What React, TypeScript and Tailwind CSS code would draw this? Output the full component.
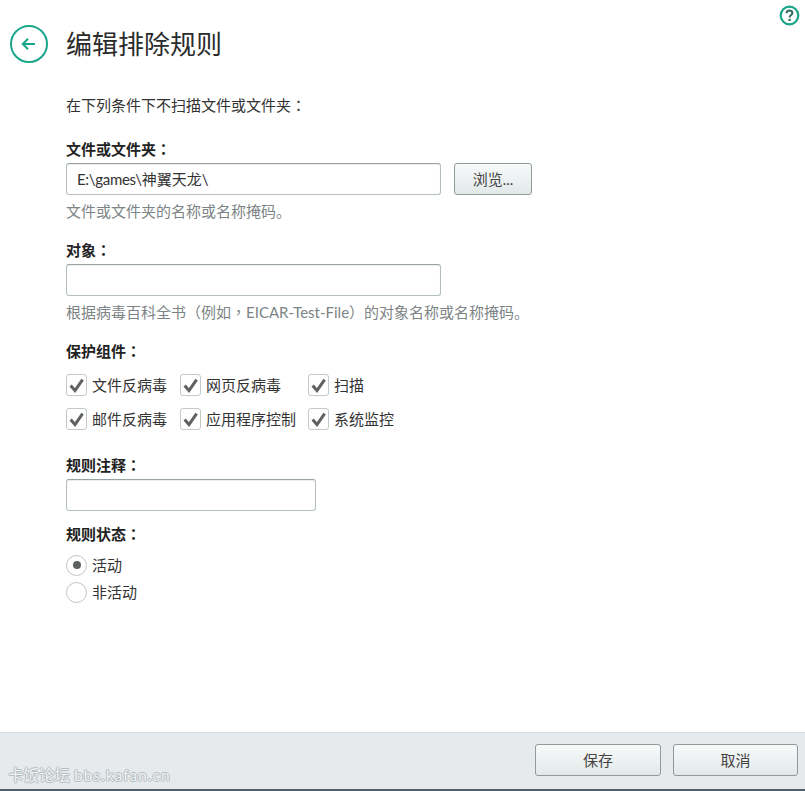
import React from "react";

const font = "font-['Lato','Noto_Sans_CJK_SC',sans-serif]";

function P({ children }: { children: React.ReactNode }) {
  return <span className="font-['Noto_Sans_CJK_TC',sans-serif]">{children}</span>;
}

function Label({ children, className = "" }: { children: React.ReactNode; className?: string }) {
  return (
    <div className={`h-5 text-[15px] leading-[18px] font-bold text-[#222] ${className}`}>
      {children}
      <P>：</P>
    </div>
  );
}

function Hint({ children, className = "" }: { children: React.ReactNode; className?: string }) {
  return <div className={`h-5 text-[15px] leading-[18px] text-[#7c8485] ${className}`}>{children}</div>;
}

function Field({ children, className = "" }: { children?: React.ReactNode; className?: string }) {
  return (
    <div className={`h-8 rounded-[3px] border border-[#b4bfbf] border-t-[#98a3a3] bg-white px-[10px] text-[15px] leading-[30px] text-[#333] shadow-[inset_0_1px_1px_rgba(0,0,0,0.08)] ${className}`}>
      {children}
    </div>
  );
}

function Btn({ children, className = "" }: { children: React.ReactNode; className?: string }) {
  return (
    <div className={`flex h-8 items-center justify-center rounded-[3px] border border-[#8f9b9b] bg-gradient-to-b from-[#f8fafa] to-[#e2e8e8] text-[15px] text-[#444] ${className}`}>
      {children}
    </div>
  );
}

function Check({ label }: { label: string }) {
  return (
    <div className="flex h-[22px] items-center">
      <div className="flex h-[22px] w-[21px] shrink-0 items-center justify-center rounded-[3px] border-[1.5px] border-[#c2c9c9] bg-white">
        <svg width="15" height="15" viewBox="0 0 15 15" fill="none">
          <path d="M1.6 7.6 L6 12.6 L13.6 1.6" stroke="#5f625e" strokeWidth="3" />
        </svg>
      </div>
      <span className="ml-[5px] text-[15px] leading-5 whitespace-nowrap text-[#333]">{label}</span>
    </div>
  );
}

function Radio({ label, on }: { label: string; on?: boolean }) {
  return (
    <div className="flex h-[22px] items-center">
      <div className="flex h-[21px] w-[21px] shrink-0 items-center justify-center rounded-full border-[1.5px] border-[#bcc4c4] bg-white">
        {on && <div className="h-2 w-2 rounded-full bg-[#5e625f]" />}
      </div>
      <span className="ml-[5px] text-[15px] leading-5 text-[#333]">{label}</span>
    </div>
  );
}

export default function App() {
  return (
    <div className={`relative flex h-[791px] w-[805px] flex-col overflow-hidden bg-white [text-spacing-trim:space-all] ${font}`}>
      <div className="absolute top-[5px] right-[5px]">
        <svg width="21" height="21" viewBox="0 0 21 21" fill="none">
          <circle cx="10.5" cy="10.5" r="8.8" stroke="#1aa689" strokeWidth="2.2" />
          <path d="M7.6 8.2 C7.6 6.4 9 5.4 10.5 5.4 C12.2 5.4 13.4 6.5 13.4 8 C13.4 10 10.6 10.2 10.6 12.4" stroke="#2e6f60" strokeWidth="2" />
          <rect x="9.5" y="13.8" width="2.2" height="2.2" fill="#2e6f60" />
        </svg>
      </div>

      <main className="flex-1 pt-[25px]">
        <div className="flex h-[38px] items-center pl-[10px]">
          <svg width="38" height="38" viewBox="0 0 38 38" fill="none">
            <circle cx="19" cy="19" r="18" stroke="#1aa689" strokeWidth="2" />
            <path d="M25 19 H13 M18 13.8 L12.8 19 L18 24.2" stroke="#1aa689" strokeWidth="2" />
          </svg>
          <h1 className="ml-[18px] text-[26px] leading-[38px] font-normal text-[#2b2b2b]">编辑排除规则</h1>
        </div>

        <div className="pt-[32px] pl-[66px]">
          <div className="h-5 text-[15px] leading-5 text-[#333]">
            在下列条件下不扫描文件或文件夹<P>：</P>
          </div>

          <Label className="mt-[25px]">文件或文件夹</Label>
          <div className="mt-[3px] flex gap-[13px]">
            <Field className="w-[375px]">
              <span className="tracking-[-0.3px]">E:\games\</span>神翼天龙\
            </Field>
            <Btn className="w-[78px]">浏览...</Btn>
          </div>
          <Hint className="mt-[7px]">文件或文件夹的名称或名称掩码。</Hint>

          <Label className="mt-[19px]">对象</Label>
          <Field className="mt-[3px] w-[375px]" />
          <Hint className="mt-[7px]">
            根据病毒百科全书<P>（</P>例如<P>，</P>EICAR-Test-File<P>）</P>的对象名称或名称掩码。
          </Hint>

          <Label className="mt-[19px]">保护组件</Label>
          <div className="mt-[12px] grid w-[342px] grid-cols-[114px_128px_100px] gap-y-3">
            <Check label="文件反病毒" />
            <Check label="网页反病毒" />
            <Check label="扫描" />
            <Check label="邮件反病毒" />
            <Check label="应用程序控制" />
            <Check label="系统监控" />
          </div>

          <Label className="mt-[26px]">规则注释</Label>
          <Field className="mt-[3px] w-[250px]" />

          <Label className="mt-[14px]">规则状态</Label>
          <div className="mt-[9px] flex flex-col gap-[5px]">
            <Radio label="活动" on />
            <Radio label="非活动" />
          </div>
        </div>
      </main>

      <footer className="relative flex h-[59px] shrink-0 justify-end gap-3 border-t border-t-[#d8dddd] border-b-2 border-b-[#4d6070] bg-[#e6eaec] pt-[11px] pr-[7px]">
        <Btn className="w-[126px]">保存</Btn>
        <Btn className="w-[125px]">取消</Btn>
        <div className="absolute bottom-[4px] left-[8px] text-[15.5px] leading-5 text-[#f0f3f4] [text-shadow:1px_0_0_#b4bcbf,-1px_0_0_#b4bcbf,0_1px_0_#b4bcbf,0_-1px_0_#b4bcbf]">
          卡饭论坛 <span className="tracking-[1px]">bbs.kafan.cn</span>
        </div>
      </footer>
    </div>
  );
}
